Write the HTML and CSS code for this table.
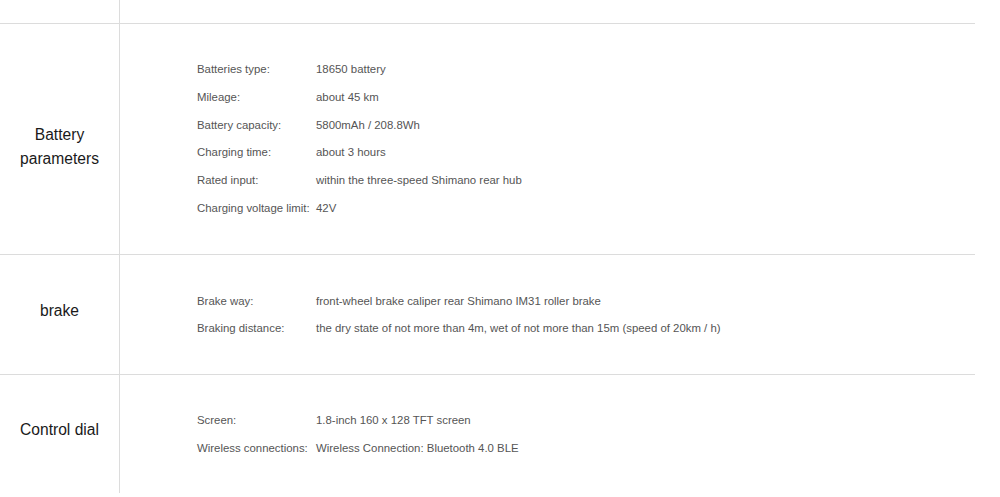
FILE: index.html
```html
<!DOCTYPE html>
<html>
<head>
<meta charset="utf-8">
<link rel="stylesheet" href="styles.css">
</head>
<body>
<div class="table">
  <div class="row row-top">
    <div class="label"></div>
    <div class="specs"></div>
  </div>
  <div class="row row-battery">
    <div class="label label-battery">Battery<br>parameters</div>
    <div class="specs specs-battery">
      <div class="spec-grid">
        <span class="k">Batteries type:</span><span class="v">18650 battery</span>
        <span class="k">Mileage:</span><span class="v">about 45 km</span>
        <span class="k">Battery capacity:</span><span class="v">5800mAh / 208.8Wh</span>
        <span class="k">Charging time:</span><span class="v">about 3 hours</span>
        <span class="k">Rated input:</span><span class="v">within the three-speed Shimano rear hub</span>
        <span class="k">Charging voltage limit:</span><span class="v">42V</span>
      </div>
    </div>
  </div>
  <div class="row row-brake">
    <div class="label label-up">brake</div>
    <div class="specs">
      <div class="spec-grid">
        <span class="k">Brake way:</span><span class="v">front-wheel brake caliper rear Shimano IM31 roller brake</span>
        <span class="k">Braking distance:</span><span class="v">the dry state of not more than 4m, wet of not more than 15m (speed of 20km / h)</span>
      </div>
    </div>
  </div>
  <div class="row row-dial">
    <div class="label label-up">Control dial</div>
    <div class="specs">
      <div class="spec-grid">
        <span class="k">Screen:</span><span class="v">1.8-inch 160 x 128 TFT screen</span>
        <span class="k">Wireless connections:</span><span class="v">Wireless Connection: Bluetooth 4.0 BLE</span>
      </div>
    </div>
  </div>
</div>
</body>
</html>
```

FILE: styles.css
```css
html, body {
  margin: 0;
  padding: 0;
  background: #fff;
}
body {
  font-family: "Liberation Sans", Arial, sans-serif;
  height: 497px;
  overflow: hidden;
}
.table {
  width: 975px;
}
.row {
  display: grid;
  grid-template-columns: 120px 1fr;
  border-top: 1px solid #dcdcdc;
}
.row-top {
  border-top: none;
  height: 23px;
}
.row-battery { height: 230px; }
.row-brake { height: 119px; }
.row-dial { height: 118px; }
.label {
  border-right: 1px solid #dcdcdc;
  display: flex;
  align-items: center;
  justify-content: center;
  text-align: center;
  font-size: 15.6px;
  line-height: 24px;
  color: #1a1a1a;
}
.label-battery { padding-top: 16px; }
.label-up { padding-bottom: 8px; }
.specs {
  display: flex;
  align-items: center;
  padding-left: 77px;
}
.specs-battery { padding-bottom: 1px; }
.spec-grid {
  display: grid;
  grid-template-columns: 119px auto;
  grid-auto-rows: 27.8px;
  align-items: center;
  font-size: 11.4px;
  color: #555;
}
.k, .v { white-space: nowrap; }
```
